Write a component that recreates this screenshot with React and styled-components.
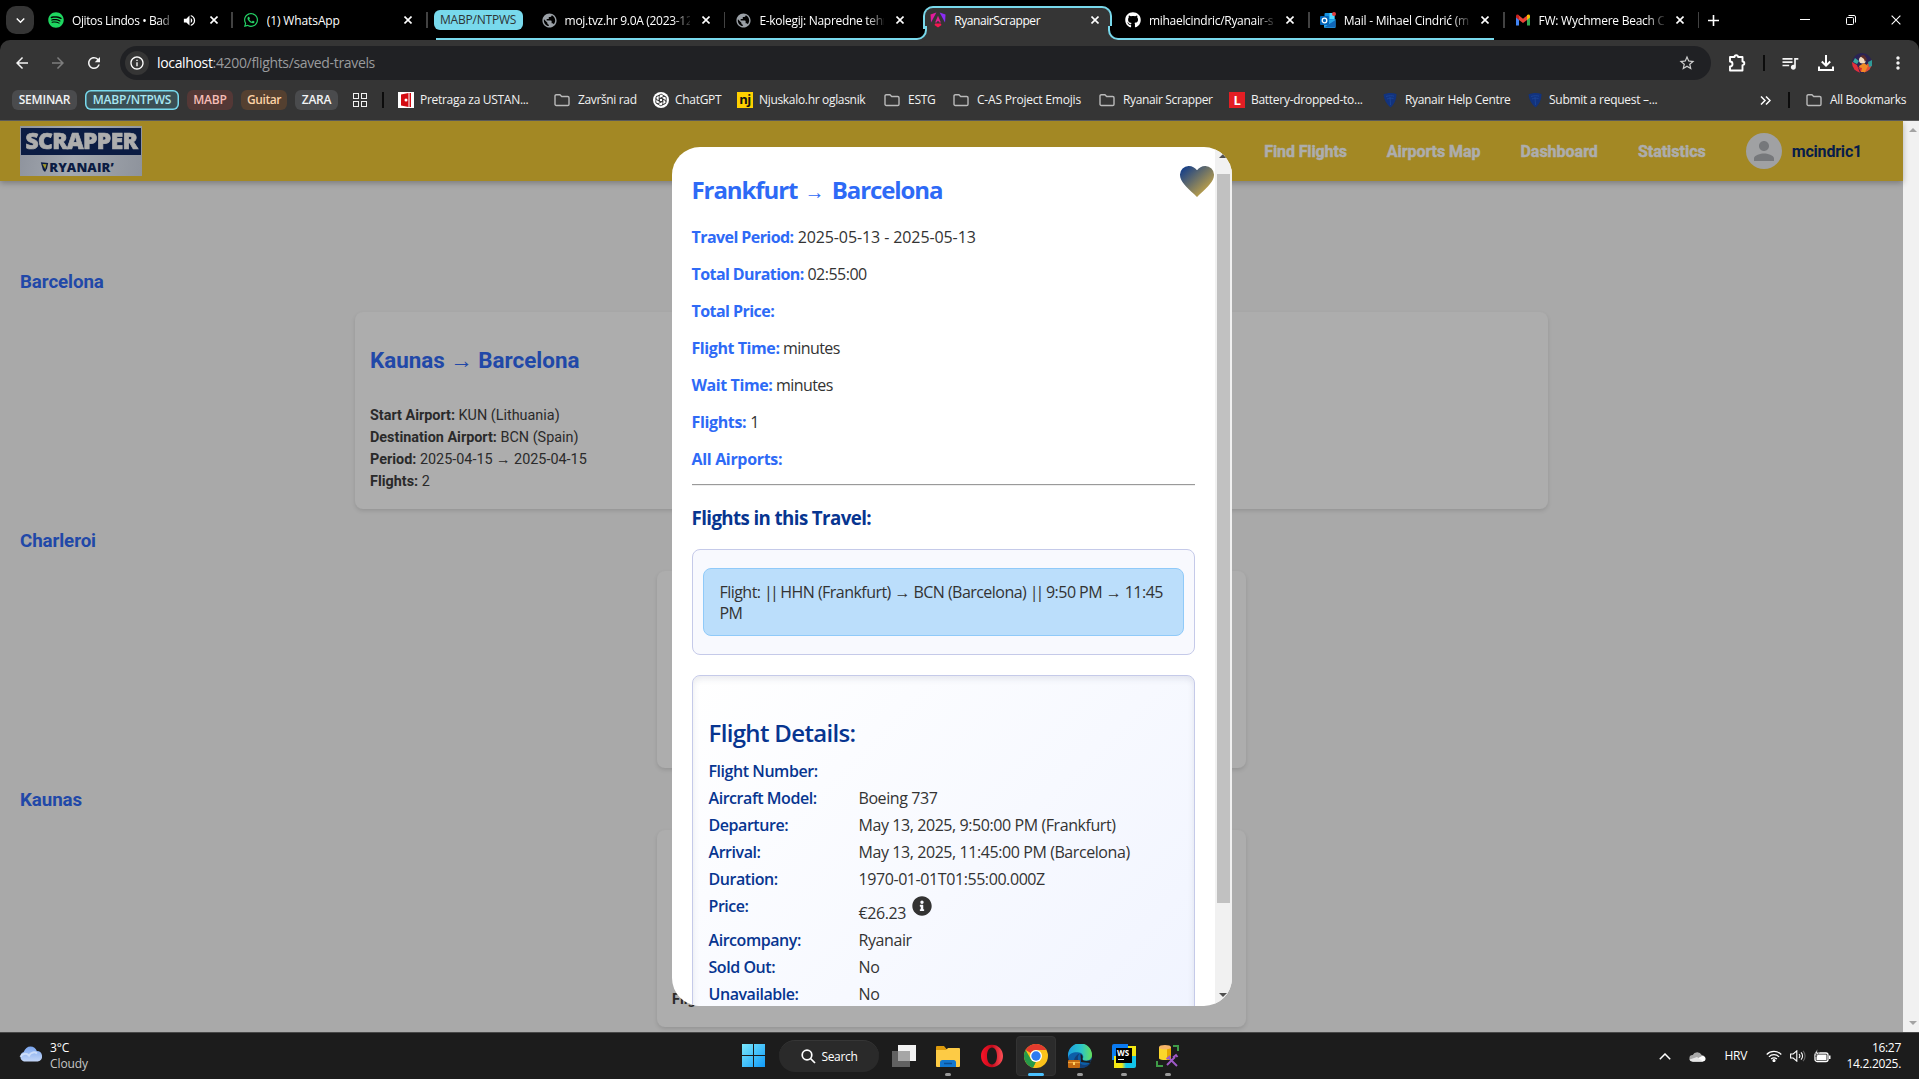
import React from 'react';
import styled, { createGlobalStyle, css } from 'styled-components';
import { FaGithub, FaSpotify, FaWhatsapp, FaInfoCircle } from 'react-icons/fa';
import {
  MdArrowBack, MdArrowForward, MdRefresh, MdInfoOutline, MdStarBorder, MdMoreVert,
  MdQueueMusic, MdPublic, MdVolumeUp, MdPerson, MdKeyboardArrowDown,
} from 'react-icons/md';

const ui = '"Open Sans", "Noto Sans", sans-serif';
const roboto = 'Roboto, "Liberation Sans", sans-serif';
const cyan = '#78d9ec';
const chrome = '#353535';

const GlobalStyle = createGlobalStyle`
  * { box-sizing: border-box; }
  body { margin: 0; background: #000; overflow: hidden; }
  svg { display: block; flex: none; }
`;

const Screen = styled.div`
  width: 1919px;
  height: 1079px;
  display: flex;
  flex-direction: column;
  overflow: hidden;
  font-family: ${ui};
`;

/* ---------- tab strip ---------- */
const TabStrip = styled.div`
  height: 40px;
  flex: none;
  display: flex;
  align-items: stretch;
  background: #000;
  color: #fff;
`;
const TabSearch = styled.div`
  width: 28px;
  height: 28px;
  margin: 6px 4px 6px 6px;
  border-radius: 10px;
  background: ${chrome};
  display: grid;
  place-items: center;
`;
const TabBox = styled.div`
  position: relative;
  width: 194.8px;
  flex: none;
  display: flex;
  align-items: center;
  padding-left: 10px;
  ${(p) => p.$divider && css`
    background: linear-gradient(#424242, #424242) 193px 12px / 2px 16px no-repeat;
  `}
  ${(p) => p.$line && css`
    &::after {
      content: '';
      position: absolute;
      bottom: 0;
      left: ${p.$line[0]}px;
      right: ${p.$line[1]}px;
      height: 2px;
      background: ${cyan};
    }
  `}
`;
const ActiveShape = styled.div`
  position: absolute;
  left: 3px;
  right: 3px;
  top: 6px;
  bottom: 0;
  background: ${chrome};
  border-radius: 10px 10px 0 0;
  &::before, &::after {
    content: '';
    position: absolute;
    bottom: 0;
    width: 12px;
    height: 12px;
    background: #000;
    border-bottom: 2px solid ${cyan};
  }
  &::before {
    left: -10px;
    border-right: 2px solid ${cyan};
    border-bottom-right-radius: 10px;
    box-shadow: 2px 2px 0 ${chrome};
  }
  &::after {
    right: -10px;
    border-left: 2px solid ${cyan};
    border-bottom-left-radius: 10px;
    box-shadow: -2px 2px 0 ${chrome};
  }
`;
const ActiveOutline = styled.div`
  position: absolute;
  inset: 0 0 11px 0;
  border: 2px solid ${cyan};
  border-bottom: 0;
  border-radius: 10px 10px 0 0;
`;
const TabIcon = styled.div`
  position: relative;
  width: 16px;
  height: 16px;
  flex: none;
`;
const TabTitle = styled.div`
  position: relative;
  width: ${(p) => p.$w || 125}px;
  margin: 2px 0 0 8px;
  overflow: hidden;
  white-space: nowrap;
  font-size: 12px;
  line-height: 18px;
  letter-spacing: ${(p) => p.$ls || 0}px;
  ${(p) => p.$fade && css`mask-image: linear-gradient(90deg, #000 86%, rgba(0, 0, 0, 0.15) 100%);`}
`;
const Audio = styled.div`
  width: 16px;
  margin-left: 9px;
`;
const Close = styled.div`
  position: relative;
  width: 20px;
  height: 20px;
  margin-left: 6px;
  display: grid;
  place-items: center;
`;
const TabGroup = styled.div`
  display: flex;
  margin-left: 8px;
`;
const ChipSlot = styled.div`
  position: relative;
  width: 95px;
  display: flex;
  align-items: center;
  border-bottom: 2px solid ${cyan};
  padding-top: 2px;
`;
const GroupChip = styled.div`
  width: 89px;
  height: 20px;
  margin-left: -2px;
  border-radius: 6px;
  background: ${cyan};
  color: #2d3436;
  font-size: 12px;
  line-height: 19px;
  text-align: center;
  letter-spacing: -0.2px;
`;
const NewTab = styled.div`
  width: 28px;
  height: 40px;
  display: grid;
  place-items: center;
`;
const WindowButtons = styled.div`
  flex: 1;
  display: flex;
  justify-content: flex-end;
`;
const WindowButton = styled.div`
  width: 46px;
  display: grid;
  place-items: center;
  &:last-child { padding-right: 2px; width: 45px; }
`;

/* ---------- toolbar ---------- */
const Toolbar = styled.div`
  height: 46px;
  flex: none;
  display: flex;
  align-items: center;
  padding: 0 3px 0 4px;
  background: ${chrome};
  border-radius: 10px 10px 0 0;
  color: #fff;
`;
const ToolButton = styled.div`
  width: 36px;
  height: 36px;
  display: grid;
  place-items: center;
  color: ${(p) => (p.$dim ? '#7d7d7d' : '#f4f4f4')};
`;
const Omnibox = styled.div`
  flex: 1;
  height: 34px;
  margin: 0 8px;
  padding: 0 15px 0 5px;
  border-radius: 17px;
  background: #202124;
  display: flex;
  align-items: center;
`;
const SiteInfo = styled.div`
  width: 24px;
  height: 24px;
  border-radius: 50%;
  background: ${chrome};
  display: grid;
  place-items: center;
`;
const Url = styled.div`
  flex: 1;
  margin-left: 8px;
  font-size: 14px;
  line-height: 20px;
  letter-spacing: -0.34px;
  color: #9a9b9d;
  span { color: #fff; }
`;
const Divider = styled.div`
  width: 2px;
  height: 16px;
  flex: none;
  background: #0c0c0c;
  margin: ${(p) => p.$m};
`;

/* ---------- bookmarks ---------- */
const Bookmarks = styled.div`
  height: 35px;
  flex: none;
  display: flex;
  align-items: center;
  padding: 0 0 6px 12px;
  background: ${chrome};
  border-bottom: 1px solid #5a5a5a;
  color: #f2f2f2;
  font-size: 12px;
  line-height: 18px;
`;
const Chip = styled.div`
  width: ${(p) => p.$w}px;
  height: 20px;
  flex: none;
  margin-right: 8px;
  border-radius: 6px;
  background: ${(p) => p.$bg};
  color: ${(p) => p.$fg};
  box-shadow: ${(p) => (p.$ring ? `inset 0 0 0 1.5px ${p.$ring}` : 'none')};
  font-weight: 600;
  line-height: 19px;
  text-align: center;
  letter-spacing: ${(p) => p.$ls || -0.2}px;
`;
const AppsGrid = styled.div`
  width: 14px;
  height: 14px;
  flex: none;
  margin-left: 7px;
  display: grid;
  grid-template-columns: 6px 6px;
  gap: 2px;
  i { height: 6px; border: 1.5px solid #f0f0f0; }
`;
const Bookmark = styled.div`
  width: ${(p) => p.$w}px;
  flex: none;
  display: flex;
  align-items: center;
  gap: ${(p) => p.$gap || 6}px;
  white-space: nowrap;
  letter-spacing: ${(p) => p.$ls}px;
`;
const Overflow = styled.div`
  width: 12px;
  margin-left: 80px;
`;

/* ---------- page ---------- */
const Viewport = styled.div`
  position: relative;
  height: 911px;
  flex: none;
  display: flex;
  background: #a9a9a9;
  overflow: hidden;
`;
const Page = styled.div`
  width: 1903px;
  font-family: ${roboto};
`;
const SiteHeader = styled.header`
  height: 60px;
  padding: 0 41px 0 20px;
  display: flex;
  align-items: center;
  justify-content: space-between;
  background: #a38824;
  box-shadow: 0 2px 6px rgba(0, 0, 0, 0.28);
  position: relative;
`;
const Logo = styled.div`
  width: 122px;
  height: 50px;
  padding: 1px;
  background: linear-gradient(100deg, #8d929c, #a4a9b0 45%, #8e939c);
`;
const LogoTop = styled.div`
  height: 27px;
  margin-top: 1px;
  background: #0b1c43;
  color: #adadad;
  font: 800 23px/25px "Open Sans", sans-serif;
  letter-spacing: -0.6px;
  text-align: center;
  -webkit-text-stroke: 0.7px #adadad;
  span { display: inline-block; transform: scaleX(0.99); margin: 0 -6px; }
`;
const LogoBottom = styled.div`
  height: 20px;
  display: flex;
  align-items: center;
  justify-content: center;
  gap: 0;
  padding: 3px 8px 0 0;
  color: #0b1c43;
  font: 800 13px/18px "Open Sans", sans-serif;
  letter-spacing: 0.1px;
  white-space: nowrap;
`;
const Nav = styled.nav`
  display: flex;
  align-items: center;
  gap: 40px;
  font-size: 16px;
  font-weight: 700;
  color: #adadad;
`;
const NavLink = styled.a`
  letter-spacing: ${(p) => p.$ls || 0}px;
  -webkit-text-stroke: 0.5px #adadad;
  padding-top: 1px;
`;
const User = styled.div`
  display: flex;
  align-items: center;
  gap: 10px;
  color: #071c4a;
  letter-spacing: -0.2px;
`;
const Avatar = styled.div`
  width: 36px;
  height: 36px;
  border-radius: 50%;
  background: #a0a1a3;
  color: #76787b;
  display: grid;
  place-items: center;
`;
const Groups = styled.main`
  padding-top: 69px;
`;
const City = styled.h3`
  margin: 0;
  height: 62px;
  padding: 0 20px 0;
  font-size: 18.72px;
  font-weight: 700;
  letter-spacing: -0.08px;
  line-height: 65px;
  color: #2148a8;
`;
const TravelCard = styled.article`
  width: ${(p) => (p.$wide ? 1193 : 589)}px;
  height: 197px;
  margin: 0 auto;
  padding: 0 15px 16px;
  border-radius: 8px;
  background: #adadad;
  box-shadow: 0 2px 4px rgba(0, 0, 0, 0.12);
  display: flex;
  flex-direction: column;
  justify-content: flex-end;
  color: #2a2a2a;
  font-size: 14.4px;
  line-height: 22px;
`;
const CardTitle = styled.h2`
  flex: 1;
  margin: 0;
  padding-top: 3px;
  display: flex;
  align-items: center;
  font-size: 22.4px;
  font-weight: 700;
  color: #2148a8;
  white-space: pre;
  span { font-weight: 400; }
`;
const PageScroll = styled.div`
  width: 16px;
  background: #f1f1f1;
  display: flex;
  flex-direction: column;
  justify-content: space-between;
  align-items: center;
  padding: 7px 0 7px 3px;
`;

/* ---------- modal ---------- */
const Overlay = styled.div`
  position: absolute;
  inset: 0 16px 0 0;
  display: flex;
  align-items: center;
  justify-content: center;
`;
const Modal = styled.section`
  width: 560px;
  height: 859px;
  border-radius: 28px;
  overflow: hidden;
  background: #fff;
  display: flex;
  color: #333;
  font-size: 16px;
`;
const ModalBody = styled.div`
  width: 543px;
  padding: 0 20px;
  position: relative;
`;
const ModalTitle = styled.h2`
  margin: 0;
  padding-top: 16px;
  height: 71px;
  font-size: 24px;
  font-weight: 700;
  line-height: 53px;
  letter-spacing: -1.08px;
  color: #2e6af6;
  white-space: nowrap;
  span { font: 700 20px/20px "Liberation Sans", sans-serif; letter-spacing: 0; padding: 0 2px; }
`;
const Heart = styled.div`
  position: absolute;
  right: 1px;
  top: 19px;
`;
const Fact = styled.div`
  height: 37px;
  line-height: 38px;
  letter-spacing: ${(p) => p.$vls || -0.1}px;
  b { color: #2e6af6; letter-spacing: ${(p) => p.$ls || -0.57}px; }
`;
const Rule = styled.hr`
  margin: 7px 0 0;
  height: 2px;
  border: 0;
  border-top: 1px solid #9a9a9a;
  background: #eee;
`;
const SubTitle = styled.h3`
  margin: 0;
  height: 63px;
  line-height: 64px;
  font-size: 18.72px;
  letter-spacing: -0.6px;
  color: #073590;
`;
const FlightList = styled.div`
  height: 106px;
  padding: 18px 10px;
  border: 1px solid #c5cae9;
  border-radius: 8px;
  background: #f8f9fe;
`;
const FlightItem = styled.div`
  height: 68px;
  padding: 13px 16px 0;
  border: 1px solid #90caf9;
  border-radius: 8px;
  background: #bbdefb;
  line-height: 21px;
  letter-spacing: -0.54px;
  white-space: pre;
`;
const Bars = styled.span`
  letter-spacing: -3px;
  margin-right: 1px;
`;
const Details = styled.div`
  height: 440px;
  margin-top: 20px;
  padding: 32px 16px 0;
  border: 1px solid #c5cae9;
  border-radius: 8px;
  background: linear-gradient(135deg, #fff, #eff3ff);
  box-shadow: inset 0 3px 6px rgba(40, 50, 90, 0.1);
`;
const DetailsTitle = styled.h2`
  margin: 0;
  height: 50px;
  line-height: 50px;
  font-size: 24px;
  font-weight: 600;
  letter-spacing: -0.66px;
  color: #073590;
`;
const DetailRow = styled.div`
  display: grid;
  grid-template-columns: 150px 1fr;
  height: ${(p) => (p.$tall ? 34 : 27)}px;
  line-height: 27px;
`;
const DetailLabel = styled.div`
  font-weight: 600;
  letter-spacing: -0.45px;
  color: #073590;
`;
const DetailValue = styled.div`
  letter-spacing: ${(p) => p.$ls || -0.42}px;
  display: flex;
  gap: 6px;
  padding-top: ${(p) => (p.$drop ? 7 : 0)}px;
  svg { margin-top: -4px; }
`;
const ModalScroll = styled.div`
  width: 17px;
  background: #f1f1f1;
  display: flex;
  flex-direction: column;
  align-items: center;
  padding: 7px 0;
`;
const Thumb = styled.div`
  width: 13px;
  height: 729px;
  margin: 16px 0 90px;
  background: #c1c1c1;
`;
const Triangle = styled.div`
  width: 0;
  height: 0;
  border: ${(p) => p.$s || 4}px solid transparent;
  border-top-width: 0;
  border-bottom: ${(p) => p.$s || 4}px solid ${(p) => p.$c};
  transform: ${(p) => (p.$down ? 'rotate(180deg)' : 'none')};
`;

/* ---------- taskbar ---------- */
const Taskbar = styled.footer`
  flex: 1;
  display: grid;
  grid-template-columns: 1fr auto 1fr;
  background: #1c1c1c;
  border-top: 1px solid #474747;
  color: #fff;
  font-size: 12px;
  line-height: 16px;
`;
const Weather = styled.div`
  display: flex;
  align-items: flex-start;
  gap: 7px;
  padding: 7px 0 0 19px;
  letter-spacing: -0.1px;
  svg { margin-top: 6px; }
  span { color: #c6c6c6; }
`;
const Apps = styled.div`
  display: flex;
  align-items: center;
  padding: 0 0 0 2px;
`;
const AppSlot = styled.div`
  position: relative;
  width: 44px;
  height: 46px;
  padding-bottom: 1px;
  display: grid;
  place-items: center;
  &::after {
    content: '';
    display: ${(p) => (p.$run ? 'block' : 'none')};
    position: absolute;
    bottom: 3px;
    left: 50%;
    width: ${(p) => (p.$active ? 16 : 6)}px;
    height: 3px;
    border-radius: 2px;
    transform: translateX(-50%);
    background: ${(p) => (p.$active ? '#4cc2ff' : '#9a9a9a')};
  }
`;
const ActiveTile = styled.div`
  width: 40px;
  height: 40px;
  border-radius: 4px;
  background: #2b2b2b;
  border: 1px solid #333;
  display: grid;
  place-items: center;
`;
const SearchPill = styled.div`
  width: 100px;
  height: 32px;
  margin: 0 3px 0 4px;
  border-radius: 16px;
  background: #2a2a2a;
  border-top: 1px solid #363636;
  display: flex;
  align-items: center;
  justify-content: center;
  gap: 5px;
  padding-left: 1px;
  letter-spacing: -0.3px;
`;
const Tray = styled.div`
  display: flex;
  justify-content: flex-end;
  align-items: center;
  padding: 0 18px 0 0;
`;
const TrayItem = styled.div`
  margin-right: ${(p) => p.$mr}px;
  letter-spacing: -0.3px;
`;
const Clock = styled.div`
  width: 56px;
  text-align: right;
  letter-spacing: -0.3px;
`;

/* ---------- drawings ---------- */
const X = ({ s = 8, w = 1.6 }) => (
  <svg width={s} height={s} viewBox="0 0 8 8" stroke="#fff" strokeWidth={w} fill="none"><path d="M.5.5l7 7M7.5.5l-7 7" /></svg>
);
const Folder = () => (
  <svg width="16" height="16" viewBox="0 0 16 16" fill="none" stroke="#b9b9b9" strokeWidth="1.4"><path d="M1 4a1.3 1.3 0 0 1 1.3-1.3h3.6l1.8 1.8h6A1.3 1.3 0 0 1 15 5.800v6.400a1.300 1.300 0 0 1-1.300 1.300H2.300A1.300 1.300 0 0 1 1 12.200z" /></svg>
);
const Angular = () => (
  <svg width="16" height="16" viewBox="0 0 16 16">
    <defs><linearGradient id="ang" x1="0" y1="0" x2="1" y2="1"><stop offset="0" stopColor="#f0186e" /><stop offset=".55" stopColor="#d91cb8" /><stop offset="1" stopColor="#8b2cf5" /></linearGradient></defs>
    <path d="M9.600.5l5.900 2-.5 8z" fill="#8b2cf5" /><path d="M6.400.5l-5.900 2 .5 8z" fill="url(#ang)" />
    <path d="M8 3.800L5.100 10.500h1.500l.5-1.300h1.800l.5 1.300h1.500z" fill="#e0208f" />
    <path d="M11.500 13L8 15.500 4.500 13l.7-1.500h5.600z" fill="#f5164e" />
  </svg>
);
const Outlook = () => (
  <svg width="16" height="16" viewBox="0 0 16 16">
    <rect x="4.500" y="1" width="10" height="12" rx="1" fill="#1490df" /><path d="M9.500 1h5v6h-5z" fill="#50d9ff" />
    <path d="M4 9l11.500-2v8a1 1 0 0 1-1 1H5a1 1 0 0 1-1-1z" fill="#28a8ea" /><path d="M4 15.500L15.500 8v7.500z" fill="#1066b8" />
    <rect y="4" width="9" height="9" rx="1" fill="#0364b8" /><circle cx="4.500" cy="8.500" r="2.300" fill="none" stroke="#fff" strokeWidth="1.300" />
    <circle cx="14" cy="2" r="2" fill="#e23b3b" />
  </svg>
);
const Gmail = () => (
  <svg width="16" height="16" viewBox="0 0 16 16">
    <path d="M1 4v9.500h3V7z" fill="#4285f4" /><path d="M15 4v9.500h-3V7z" fill="#34a853" />
    <path d="M4 3.500l4 3.200 4-3.200V8l-4 3-4-3z" fill="#ea4335" /><path d="M1 4c0-1.800 1.800-2 3-.9V8L1 5.600z" fill="#c5221f" /><path d="M15 4c0-1.800-1.800-2-3-.9V8l3-2.400z" fill="#fbbc04" />
  </svg>
);
const Harp = () => (
  <svg width="16" height="16" viewBox="0 0 16 16"><path d="M1.500 2.500c4-2 9-2 13-.5-.3 6-2 10-6 13.500C4.500 12 2 8 1.500 2.500z" fill="#12337e" /><path d="M4 4.500c3-1 6-1 8-.3M5 7c2-1 4-1 6.500-.5M8 5l.5 8" stroke="#1d479b" fill="none" strokeWidth=".8" /></svg>
);
const ChatGpt = () => (
  <svg width="16" height="16" viewBox="0 0 16 16"><circle cx="8" cy="8" r="8" fill="#fff" />
    <g fill="none" stroke="#333" strokeWidth=".9">{[0, 60, 120, 180, 240, 300].map((a) => <path key={a} transform={`rotate(${a} 8 8)`} d="M6.200 7V4.200a2 2 0 0 1 3.600-1.100L12 4.500M6.200 7L8 6l2 1.100" />)}</g>
  </svg>
);
const Red = () => (
  <svg width="16" height="16" viewBox="0 0 16 16"><path fill="#fff" d="M0 0h16v16H0z" /><path d="M3 2.500L10.500 1v14L3 13.500z" fill="#d40b12" /><path d="M11.500 1H13v14h-1.500z" fill="#d40b12" /><circle cx="8" cy="8" r="1.500" fill="#fff" /></svg>
);
const Badge = styled.div`
  width: 16px;
  height: 16px;
  background: ${(p) => p.$bg};
  color: ${(p) => p.$fg};
  font: 700 13px/${(p) => p.$lh || 16}px "Open Sans", sans-serif;
  letter-spacing: -0.5px;
  text-align: center;
`;
const Puzzle = () => (
  <svg width="18" height="20" viewBox="0 0 18 20" fill="none" stroke="#fff" strokeWidth="1.900" strokeLinejoin="round"><path d="M2 4h4.500a1.800 1.800 0 0 1 3.600 0H14.500v4.500a1.800 1.800 0 0 1 0 3.600V17.500H2v-4a2.300 2.300 0 0 0 0-5z" /></svg>
);
const Download = () => (
  <svg width="18" height="18" viewBox="0 0 18 18" fill="none" stroke="#fff" strokeWidth="2"><path d="M9 1v10.500M4.800 7.500L9 11.700l4.200-4.200M2 12.500V16h14v-3.500" /></svg>
);
const Profile = () => (
  <svg width="20" height="20" viewBox="0 0 20 20"><circle cx="10" cy="10" r="10" fill="#2a2354" />
    <path d="M0 9l5 3 3 7.700A10 10 0 0 1 0 10z" fill="#e0303a" /><path d="M3 5l4 3-2 3-4-2z" fill="#3aa8a0" /><path d="M20 9l-5 2-3 8.700A10 10 0 0 0 20 10z" fill="#e0503a" /><path d="M16 9l4-2v6l-3 1z" fill="#2f9a98" />
    <circle cx="10.500" cy="7" r="3.500" fill="#f3dcc0" /><path d="M8 3l4-1 3 4-2 3-1-3z" fill="#5a2d28" /><path d="M7 13l5-3 4 3-3 6H9z" fill="#f08a24" /><path d="M6 14l4 1-1 4z" fill="#d92b35" />
  </svg>
);
const Shield = () => (
  <svg width="9" height="12" viewBox="0 0 8 12"><path d="M.3 1.200L7.700 2 6.500 7.500 4.500 11 2.500 9z" fill="#0b1c43" /><path d="M2 3l4 .3-1.300 5z" fill="#a39a2c" /></svg>
);
const HeartIcon = () => (
  <svg width="34" height="31" viewBox="0 0 34 31"><defs><linearGradient id="hrt" x1="0" y1="0" x2="1" y2="1"><stop offset=".08" stopColor="#163f88" /><stop offset=".82" stopColor="#c3a447" /></linearGradient></defs>
    <path d="M17 31L14.500 28.600C5.800 20.300 0 15.200 0 9A8.800 8.800 0 0 1 9 0c3.100 0 6 1.700 8 4.300C19 1.700 21.900 0 25 0a8.800 8.800 0 0 1 9 9c0 6.200-5.800 11.300-14.500 19.600z" fill="url(#hrt)" /></svg>
);
const Cloud = () => (
  <svg width="24" height="16" viewBox="0 0 24 16"><defs><linearGradient id="cl" x1="0" y1="0" x2="0" y2="1"><stop offset="0" stopColor="#7aa5ee" /><stop offset="1" stopColor="#c3d6f7" /></linearGradient></defs>
    <path d="M5 15.500a5 5 0 0 1-.3-9.500C6 2.500 8.500.5 11.500.5c3 0 5.500 1.800 6.300 4.500a5.300 5.300 0 0 1 1 10.500z" fill="url(#cl)" /><path d="M1.500 11c1-3 5.500-4.500 8.500-1.500 2-3.500 6-4 8-2" stroke="#dfe9fb" strokeWidth="2" fill="none" opacity=".7" /></svg>
);
const WinLogo = () => (
  <svg width="23" height="23" viewBox="0 0 23 23"><defs><linearGradient id="win" gradientUnits="userSpaceOnUse" x1="0" y1="0" x2="23" y2="23"><stop offset="0" stopColor="#7ae8fc" /><stop offset="1" stopColor="#109af8" /></linearGradient></defs>
    <path d="M0 0h11v11H0zM12 0h11v11H12zM0 12h11v11H0zM12 12h11v11H12z" fill="url(#win)" /></svg>
);
const TaskView = () => (
  <svg width="24" height="22" viewBox="0 0 24 22"><path d="M6 0h18v16H6z" fill="#f2f2f2" /><path d="M0 6h18v16H0z" fill="#616161" /><path d="M6 6h12v10H6z" fill="#a6a6a6" /></svg>
);
const Explorer = () => (
  <svg width="24" height="22" viewBox="0 0 24 22"><path d="M0 2a1 1 0 0 1 1-1h7l2.500 3H22v8H0z" fill="#dd9a0c" /><path d="M0 5h10l2-2h11a1 1 0 0 1 1 1v17a1 1 0 0 1-1 1H1a1 1 0 0 1-1-1z" fill="#fdcb45" /><path d="M4 22v-4.500A2.500 2.500 0 0 1 6.500 15h11a2.500 2.500 0 0 1 2.500 2.500V22z" fill="#1277cf" /><path d="M8 18.500h8" stroke="#0b4f94" strokeWidth="1.500" /></svg>
);
const Opera = () => (
  <svg width="24" height="24" viewBox="0 0 24 24"><defs><linearGradient id="op" x1="0" x2="1"><stop offset="0" stopColor="#fb1428" /><stop offset=".5" stopColor="#c20a1b" /><stop offset="1" stopColor="#ff5057" /></linearGradient></defs><path fillRule="evenodd" d="M12 .8c6.300 0 11 4.900 11 11.200s-4.700 11.200-11 11.200S1 18.300 1 12 5.700.8 12 .8zm0 2.700c-3.200 0-5 3.700-5 8.500s1.800 8.500 5 8.500 5-3.700 5-8.500-1.800-8.500-5-8.500z" fill="url(#op)" /></svg>
);
const ChromeLogo = () => (
  <svg width="24" height="24" viewBox="0 0 24 24"><circle cx="12" cy="12" r="12" fill="#fcc21b" /><path d="M1.600 6A12 12 0 0 1 22.400 6H12a6 6 0 0 0-5.200 3z" fill="#e33b2e" /><path d="M1.600 6l5.200 9A6 6 0 0 0 12 18h.2l-3 5.700A12 12 0 0 1 1.600 6z" fill="#269a49" /><path d="M12 18a6 6 0 0 0 5.200-3l-5 9h-3z" fill="#fcc21b" /><circle cx="12" cy="12" r="6" fill="#fff" /><circle cx="12" cy="12" r="4.700" fill="#2f7bf0" /></svg>
);
const Edge = () => (
  <svg width="24" height="24" viewBox="0 0 24 24"><defs><linearGradient id="ed" x1="0" x2="1"><stop offset="0" stopColor="#1c9ee0" /><stop offset=".55" stopColor="#2bc4c9" /><stop offset="1" stopColor="#66e05a" /></linearGradient></defs>
    <circle cx="12" cy="12" r="12" fill="#0d5fa8" /><path d="M0 11.500A12 12 0 0 1 24 11c0 4-3 5.600-6 5.600-2.500 0-3.500-1-3.200-2 1-1.500.8-5.600-3.800-6.200C6 7.800 1 9 0 14z" fill="url(#ed)" /><path d="M12 9.500c-3 2-3 8 1 10.500 3 1.700 7 1 10-1.500-3 5-9 7-14 4C4.500 19.500 5 12 12 9.500z" fill="#123f78" /><path d="M12.500 10c2.500 1 2.500 3.500 1.800 5 .3 2 4 2.600 8.700 1l-1 3-9-1z" fill="#1c1c1c" />
    <rect y="16" width="12" height="8" rx="1" fill="#c46a12" /><path d="M0 18.500h12" stroke="#f0a23a" strokeWidth="1.200" /><path d="M5 18h2v3H5z" fill="#ffd060" /></svg>
);
const WsFrame = styled.div`
  width: 24px;
  height: 24px;
  display: grid;
  place-items: center;
  background:
    linear-gradient(90deg, #f3e713 0 8px, #12c4ea 12px) 2px 100% / 22px 12px no-repeat,
    linear-gradient(#0a78f0, #0a86f5) 0 0 / 16px 16px no-repeat,
    linear-gradient(#f3e713, #f3e713) 100% 2px / 10px 12px no-repeat;
  border-radius: 2px;
`;
const WsCore = styled.div`
  width: 16px;
  height: 15px;
  background: #000;
  color: #fff;
  font: 700 8px/9px "Open Sans", sans-serif;
  padding-left: 1px;
  &::after { content: ''; display: block; width: 6px; height: 1px; margin: 2px 0 0 1px; background: #fff; }
`;
const DbTool = () => (
  <svg width="24" height="24" viewBox="0 0 24 24"><path d="M3 3h12v11.500c-1.500 2-10.500 2-12 0z" fill="#fbd72b" /><path d="M11 3h4v11.500c-1 1-2.500 1.300-4 1.500z" fill="#e5a800" /><ellipse cx="9" cy="3.200" rx="6" ry="2.300" fill="#f6b367" /><path d="M17 2h5v5M1 17v5h6" stroke="#3f9c48" strokeWidth="2" fill="none" /><path d="M11 21l8-8M12 13l9 9M10.500 15l4-3M17 13.500l3-2.500 1.500 2" stroke="#a05ac8" strokeWidth="1.900" fill="none" /></svg>
);
const Wifi = () => (
  <svg width="16" height="12" viewBox="0 0 16 12" fill="none" stroke="#fff" strokeWidth="1.200"><path d="M.7 4.500a10.300 10.300 0 0 1 14.600 0M2.900 6.800a7.200 7.200 0 0 1 10.200 0M5.100 9a4.100 4.100 0 0 1 5.800 0" /><circle cx="8" cy="10.500" r="1" fill="#fff" /></svg>
);
const Sound = () => (
  <svg width="16" height="12" viewBox="0 0 16 12" fill="none" stroke="#fff" strokeWidth="1.100"><path d="M.6 4h2.600L6.800.9v10.200L3.200 8H.6zM9 4a3 3 0 0 1 0 4M11 2.300a5.200 5.200 0 0 1 0 7.400" /><path d="M13 .8a7.500 7.500 0 0 1 0 10.400" stroke="#666" /></svg>
);
const Battery = () => (
  <svg width="17" height="14" viewBox="0 0 17 14"><rect x="1" y="4" width="13" height="8.500" rx="2" fill="none" stroke="#fff" strokeWidth="1.300" /><rect x="2.500" y="5.500" width="10" height="5.600" fill="#fff" /><path d="M15 6.500h1.500v3.500H15z" fill="#fff" /><path d="M3.500 0L.5 4.700h2.300L1.800 8 5.200 3.400H3z" fill="#fff" stroke="#1c1c1c" strokeWidth=".5" /></svg>
);

const Tab = ({ icon, title, w, ls, fade, audio, line, divider, active }) => (
  <TabBox $line={line} $divider={divider}>
    {active && <ActiveShape><ActiveOutline /></ActiveShape>}
    <TabIcon>{icon}</TabIcon>
    <TabTitle $w={w} $ls={ls} $fade={fade}>{title}</TabTitle>
    {audio && <Audio><MdVolumeUp size={15} /></Audio>}
    <Close><X /></Close>
  </TabBox>
);

const facts = [
  ['Travel Period:', '2025-05-13 - 2025-05-13', -0.57, -0.1],
  ['Total Duration:', '02:55:00', -0.58, -0.5],
  ['Total Price:', '', -0.55],
  ['Flight Time:', 'minutes', -0.42, -0.6],
  ['Wait Time:', 'minutes', -0.4, -0.6],
  ['Flights:', '1', -0.35],
  ['All Airports:', '', -0.33],
];
const details = [
  ['Flight Number:', ''],
  ['Aircraft Model:', 'Boeing 737'],
  ['Departure:', 'May 13, 2025, 9:50:00 PM (Frankfurt)'],
  ['Arrival:', 'May 13, 2025, 11:45:00 PM (Barcelona)'],
  ['Duration:', '1970-01-01T01:55:00.000Z'],
  ['Price:', '€26.23', true],
  ['Aircompany:', 'Ryanair'],
  ['Sold Out:', 'No'],
  ['Unavailable:', 'No'],
];

export default function App() {
  return (
    <Screen>
      <GlobalStyle />
      <TabStrip>
        <TabSearch><MdKeyboardArrowDown size={17} /></TabSearch>
        <Tab icon={<FaSpotify size={16} color="#1ed760" />} title="Ojitos Lindos • Bad" w={101} ls={-0.4} fade audio divider />
        <Tab icon={<FaWhatsapp size={16} color="#25d366" />} title="(1) WhatsApp" ls={-0.12} divider />
        <TabGroup>
          <ChipSlot><GroupChip>MABP/NTPWS</GroupChip></ChipSlot>
          <Tab icon={<MdPublic size={17} color="#9aa0a6" />} title="moj.tvz.hr 9.0A (2023-12-01)" ls={-0.3} fade line={[0, 0]} divider />
          <Tab icon={<MdPublic size={17} color="#9aa0a6" />} title="E-kolegij: Napredne tehnologije" ls={-0.3} fade line={[0, 7]} />
          <Tab icon={<Angular />} title="RyanairScrapper" ls={-0.42} active />
          <Tab icon={<FaGithub size={16} color="#fff" />} title="mihaelcindric/Ryanair-scrapper" ls={-0.3} fade line={[6, 0]} divider />
          <Tab icon={<Outlook />} title="Mail - Mihael Cindrić (mcindric)" ls={-0.25} fade line={[0, 11]} divider />
        </TabGroup>
        <Tab icon={<Gmail />} title="FW: Wychmere Beach Club" ls={-0.25} fade divider />
        <NewTab><svg width="11" height="11" viewBox="0 0 11 11" stroke="#fff" strokeWidth="1.6"><path d="M5.500 0v11M0 5.500h11" /></svg></NewTab>
        <WindowButtons>
          <WindowButton><svg width="10" height="10" viewBox="0 0 10 10" stroke="#fff"><path d="M0 4.500h10" /></svg></WindowButton>
          <WindowButton><svg width="10" height="10" viewBox="0 0 10 10" fill="none" stroke="#fff"><rect x=".5" y="2.500" width="7" height="7" rx="1" /><path d="M2.500.5H8a1.500 1.500 0 0 1 1.500 1.500v5.500" /></svg></WindowButton>
          <WindowButton><X s={10} w={0.9} /></WindowButton>
        </WindowButtons>
      </TabStrip>

      <Toolbar>
        <ToolButton><MdArrowBack size={18} /></ToolButton>
        <ToolButton $dim><MdArrowForward size={18} /></ToolButton>
        <ToolButton><MdRefresh size={18} /></ToolButton>
        <Omnibox>
          <SiteInfo><MdInfoOutline size={16} color="#fff" /></SiteInfo>
          <Url><span>localhost</span>:4200/flights/saved-travels</Url>
          <MdStarBorder size={18} color="#d0d0d0" />
        </Omnibox>
        <ToolButton><Puzzle /></ToolButton>
        <Divider $m="0 7px 0 8px" />
        <ToolButton><MdQueueMusic size={20} /></ToolButton>
        <ToolButton><Download /></ToolButton>
        <ToolButton><Profile /></ToolButton>
        <ToolButton><MdMoreVert size={20} /></ToolButton>
      </Toolbar>

      <Bookmarks>
        <Chip $w={65} $bg="#4a4b4d" $fg="#f1f3f4">SEMINAR</Chip>
        <Chip $w={94} $bg="#3b4f54" $fg="#a8e6f2" $ring={cyan}>MABP/NTPWS</Chip>
        <Chip $w={46} $bg="#543836" $fg="#f6bdb7">MABP</Chip>
        <Chip $w={46} $bg="#544030" $fg="#fbd2a5" $ls={-0.4}>Guitar</Chip>
        <Chip $w={43} $bg="#4a4b4d" $fg="#f1f3f4">ZARA</Chip>
        <AppsGrid><i /><i /><i /><i /></AppsGrid>
        <Divider $m="0 14px 0 15px" />
        <Bookmark $w={156} $ls={-0.3}><Red />Pretraga za USTAN...</Bookmark>
        <Bookmark $w={99} $gap={8} $ls={-0.36}><Folder />Završni rad</Bookmark>
        <Bookmark $w={84} $ls={-0.3}><ChatGpt />ChatGPT</Bookmark>
        <Bookmark $w={147} $ls={-0.32}><Badge $bg="#ffd000" $fg="#111" $lh={14}>nj</Badge>Njuskalo.hr oglasnik</Bookmark>
        <Bookmark $w={69} $gap={8} $ls={-0.25}><Folder />ESTG</Bookmark>
        <Bookmark $w={146} $gap={8} $ls={-0.2}><Folder />C-AS Project Emojis</Bookmark>
        <Bookmark $w={130} $gap={8} $ls={-0.36}><Folder />Ryanair Scrapper</Bookmark>
        <Bookmark $w={153} $ls={-0.28}><Badge $bg="#e31e24" $fg="#fff">L</Badge>Battery-dropped-to...</Bookmark>
        <Bookmark $w={145} $gap={7} $ls={-0.34}><Harp />Ryanair Help Centre</Bookmark>
        <Bookmark $w={153} $ls={-0.28}><Harp />Submit a request –...</Bookmark>
        <Overflow><svg width="11" height="9" viewBox="0 0 11 9" fill="none" stroke="#fff" strokeWidth="1.500"><path d="M1 .5l4 4-4 4M6 .5l4 4-4 4" /></svg></Overflow>
        <Divider $m="0 16px 0 16px" />
        <Bookmark $w={110} $gap={8} $ls={-0.3}><Folder />All Bookmarks</Bookmark>
      </Bookmarks>

      <Viewport>
        <Page>
          <SiteHeader>
            <Logo>
              <LogoTop><span>SCRAPPER</span></LogoTop>
              <LogoBottom><Shield />RYANAIR’</LogoBottom>
            </Logo>
            <Nav>
              <NavLink $ls={-0.12}>Find Flights</NavLink>
              <NavLink $ls={-0.06}>Airports Map</NavLink>
              <NavLink>Dashboard</NavLink>
              <NavLink>Statistics</NavLink>
              <User><Avatar><MdPerson size={30} /></Avatar>mcindric1</User>
            </Nav>
          </SiteHeader>
          <Groups>
            <City>Barcelona</City>
            <TravelCard $wide>
              <CardTitle>Kaunas <span>→</span> Barcelona</CardTitle>
              <div><b>Start Airport:</b> KUN (Lithuania)</div>
              <div><b>Destination Airport:</b> BCN (Spain)</div>
              <div><b>Period:</b> 2025-04-15 → 2025-04-15</div>
              <div><b>Flights:</b> 2</div>
            </TravelCard>
            <City>Charleroi</City>
            <TravelCard />
            <City>Kaunas</City>
            <TravelCard><div><b>Flights:</b></div></TravelCard>
          </Groups>
        </Page>
        <PageScroll>
          <Triangle $c="#a3a3a3" />
          <Triangle $c="#a3a3a3" $down />
        </PageScroll>
        <Overlay>
          <Modal>
            <ModalBody>
              <Heart><HeartIcon /></Heart>
              <ModalTitle>Frankfurt <span>→</span> Barcelona</ModalTitle>
              {facts.map(([k, v, ls, vls]) => <Fact key={k} $ls={ls} $vls={vls}><b>{k}</b> {v}</Fact>)}
              <Rule />
              <SubTitle>Flights in this Travel:</SubTitle>
              <FlightList>
                <FlightItem>Flight: <Bars>||</Bars> HHN (Frankfurt) → BCN (Barcelona) <Bars>||</Bars> {'9:50 PM → 11:45\nPM'}</FlightItem>
              </FlightList>
              <Details>
                <DetailsTitle>Flight Details:</DetailsTitle>
                {details.map(([k, v, info]) => (
                  <DetailRow key={k} $tall={info}>
                    <DetailLabel>{k}</DetailLabel>
                    <DetailValue $drop={info}>{v}{info && <FaInfoCircle size={20} />}</DetailValue>
                  </DetailRow>
                ))}
              </Details>
            </ModalBody>
            <ModalScroll>
              <Triangle $c="#505050" />
              <Thumb />
              <Triangle $c="#505050" $down />
            </ModalScroll>
          </Modal>
        </Overlay>
      </Viewport>

      <Taskbar>
        <Weather><Cloud /><div>3°C<br /><span>Cloudy</span></div></Weather>
        <Apps>
          <AppSlot><WinLogo /></AppSlot>
          <SearchPill>
            <svg width="15" height="15" viewBox="0 0 15 15" fill="none" stroke="#fff" strokeWidth="1.700"><circle cx="6" cy="6" r="4.800" /><path d="M9.500 9.500l4.500 4.500" /></svg>
            Search
          </SearchPill>
          <AppSlot><TaskView /></AppSlot>
          <AppSlot $run><Explorer /></AppSlot>
          <AppSlot><Opera /></AppSlot>
          <AppSlot $run $active><ActiveTile><ChromeLogo /></ActiveTile></AppSlot>
          <AppSlot $run><Edge /></AppSlot>
          <AppSlot $run><WsFrame><WsCore>WS</WsCore></WsFrame></AppSlot>
          <AppSlot $run><DbTool /></AppSlot>
        </Apps>
        <Tray>
          <TrayItem $mr={18}><svg width="12" height="7" viewBox="0 0 12 7" fill="none" stroke="#fff" strokeWidth="1.500"><path d="M.8 6.200L6 1l5.200 5.200" /></svg></TrayItem>
          <TrayItem $mr={18}><svg width="17" height="11" viewBox="0 0 17 11"><path d="M3.500 10.500a3.200 3.200 0 0 1 .2-6.400 5 5 0 0 1 9-.2 3.400 3.400 0 0 1 .8 6.600z" fill="#a9a9a9" /><path d="M3 10.500L13 5c2.500-.3 4 1.500 3.500 3.500-.3 1.300-1.400 2-2.700 2z" fill="#fff" /><path d="M.6 8.500L8 6l6 4.500H3.500c-1.500 0-2.500-.8-2.900-2z" fill="#e6e6e6" /></svg></TrayItem>
          <TrayItem $mr={19}>HRV</TrayItem>
          <TrayItem $mr={8}><Wifi /></TrayItem>
          <TrayItem $mr={8}><Sound /></TrayItem>
          <TrayItem $mr={14}><Battery /></TrayItem>
          <Clock>16:27<br />14.2.2025.</Clock>
        </Tray>
      </Taskbar>
    </Screen>
  );
}
